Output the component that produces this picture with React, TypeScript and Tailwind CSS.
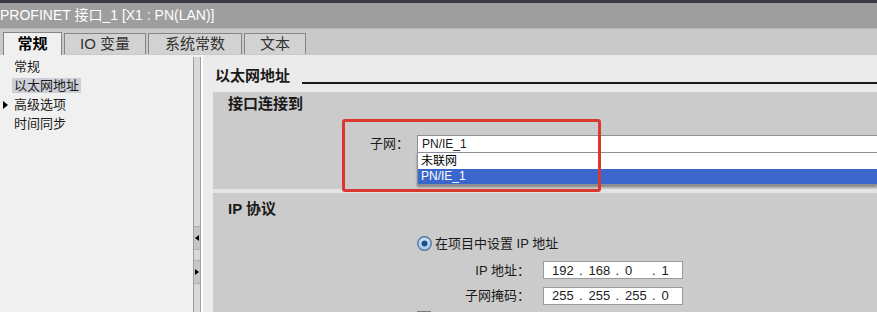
import React from "react";

const font = { fontFamily: '"Liberation Sans", "Noto Sans CJK SC", sans-serif' };

const tabs = [
  { label: "常规", w: "w-[59px]", active: true },
  { label: "IO 变量", w: "w-[82px]", active: false },
  { label: "系统常数", w: "w-[94px]", active: false },
  { label: "文本", w: "w-[62px]", active: false },
];

const navItems = ["常规", "以太网地址", "高级选项", "时间同步"];

function IpField({ parts }: { parts: string[] }) {
  return (
    <div className="flex h-[18px] w-[140px] shrink-0 items-center border border-[#9a9a9a] bg-white pl-[8px] text-[13px] text-[#222]">
      {parts.map((p, i) => (
        <div key={i} className="flex w-[36.5px] shrink-0">
          <span className="w-[27px]">{p}</span>
          {i < parts.length - 1 && <span>.</span>}
        </div>
      ))}
    </div>
  );
}

function Radio() {
  return (
    <svg width="15" height="15" viewBox="0 0 15 15">
      <defs>
        <radialGradient id="rg" cx="50%" cy="40%" r="60%">
          <stop offset="0%" stopColor="#e6f3ff" />
          <stop offset="100%" stopColor="#8fc0e8" />
        </radialGradient>
      </defs>
      <circle cx="7.5" cy="7.5" r="6.8" fill="url(#rg)" stroke="#4f6f94" strokeWidth="1.2" />
      <circle cx="7.5" cy="7.5" r="3" fill="#1f4f86" />
    </svg>
  );
}

export default function App() {
  return (
    <div className="relative flex h-[312px] w-[877px] flex-col overflow-hidden bg-[#f0f0f0] text-[#1a1a1a]" style={font}>
      {/* window title */}
      <div className="h-[3px] shrink-0 bg-[#3a3a46]" />
      <div className="flex h-[25px] shrink-0 items-center bg-[#9e9e9e] text-[14px] text-white">PROFINET 接口_1 [X1 : PN(LAN)]</div>

      {/* tabs */}
      <div className="flex h-[27px] shrink-0 items-end gap-[2px] border-t border-[#b4b4b4] bg-[#c9c9c9] pl-[3px]">
        {tabs.map((t) => (
          <div
            key={t.label}
            className={`${t.w} flex shrink-0 items-center justify-center border border-b-0 border-[#858585] text-[15px] ${
              t.active ? "h-[23px] bg-[#f0f0f0] font-bold text-black" : "mb-[1px] h-[21px] border-b bg-[#d2d2d2] text-[#333]"
            }`}
          >
            {t.label}
          </div>
        ))}
      </div>

      <div className="flex min-h-0 flex-1">
        {/* left navigation */}
        <div className="w-[193px] shrink-0 pt-[2px] text-[13px]">
          {navItems.map((item) => (
            <div key={item} className="relative flex h-[19px] items-center">
              {item === "高级选项" && (
                <span className="absolute left-[3px] top-[6px] h-0 w-0 border-y-[4px] border-l-[5px] border-y-transparent border-l-black" />
              )}
              <span className={`ml-[12px] px-[2px] leading-[15px] ${item === "以太网地址" ? "bg-[#cdcfd6]" : ""}`}>{item}</span>
            </div>
          ))}
        </div>

        {/* splitter */}
        <div className="mt-[2px] flex w-[8px] shrink-0 flex-col border-x border-[#9f9f9f] bg-[#d9d9d9]">
          <div className="h-[169px] shrink-0" />
          <div className="flex h-[24px] shrink-0 items-center justify-center border-y border-[#b0b0b0] bg-[#c6c6c6]">
            <span className="h-0 w-0 border-y-[3px] border-r-[4px] border-y-transparent border-r-black" />
          </div>
          <div className="h-[10px] shrink-0" />
          <div className="flex h-[24px] shrink-0 items-center justify-center border-y border-[#b0b0b0] bg-[#c6c6c6]">
            <span className="h-0 w-0 border-y-[3px] border-l-[4px] border-y-transparent border-l-black" />
          </div>
        </div>
        <div className="w-[2px] shrink-0 bg-white" />

        {/* main content */}
        <div className="flex min-w-0 flex-1 flex-col bg-[#ebebeb] pl-[10px]">
          <div className="flex h-[37px] shrink-0 items-start pl-[2px] pt-[11px]">
            <span className="text-[15px] font-bold leading-[20px]">以太网地址</span>
            <div className="ml-[12px] mt-[16px] h-[1.5px] flex-1 bg-[#1a1a1a]" />
          </div>

          {/* interface connected to */}
          <div className="h-[97px] shrink-0 bg-[#cbcbcb]">
            <div className="pl-[15px] pt-[2px] text-[15px] font-bold leading-[20px]">接口连接到</div>
            <div className="mt-[20px] flex items-center text-[13px]">
              <span className="w-[204px] shrink-0 pr-[8px] text-right">子网：</span>
              <div className="relative flex-1">
                <div className="flex h-[18px] items-center border border-r-0 border-[#8e9099] bg-white pl-[4px] text-[12px]">PN/IE_1</div>
                <div className="absolute left-0 right-0 top-[17px] border border-r-0 border-[#8e9099] bg-white text-[12px] shadow-[0_2px_2px_rgba(0,0,0,0.35)]">
                  <div className="h-[16px] pl-[3px] leading-[16px] text-black">未联网</div>
                  <div className="h-[15px] bg-[#3b67cc] pl-[3px] leading-[15px] text-white">PN/IE_1</div>
                </div>
              </div>
            </div>
          </div>
          <div className="h-[4px] shrink-0 bg-[#e4e4e4]" />

          {/* IP protocol */}
          <div className="flex-1 bg-[#cbcbcb]">
            <div className="pl-[15px] pt-[6px] text-[15px] font-bold leading-[20px]">IP 协议</div>
            <div className="ml-[204px] mt-[15px] flex items-center gap-[3px] text-[13px]">
              <Radio />
              <span>在项目中设置 IP 地址</span>
            </div>
            <div className="mt-[7px] flex items-center text-[13px]">
              <span className="w-[330px] shrink-0 pr-[13px] text-right">IP 地址：</span>
              <IpField parts={["192", "168", "0", "1"]} />
            </div>
            <div className="mt-[6px] flex items-center text-[13px]">
              <span className="w-[330px] shrink-0 pr-[13px] text-right">子网掩码：</span>
              <IpField parts={["255", "255", "255", "0"]} />
            </div>
            <div className="ml-[204px] mt-[3px] flex items-center gap-[4px] text-[13px]">
              <span className="h-[14px] w-[14px] shrink-0 border border-[#7a7a7a] bg-white" />
              <span>使用路由器</span>
            </div>
          </div>
        </div>
      </div>

      {/* red annotation box */}
      <div className="absolute left-[342px] top-[119px] h-[73px] w-[259px] rounded-[3px] border-[3px] border-[#d8382e]" />
    </div>
  );
}
